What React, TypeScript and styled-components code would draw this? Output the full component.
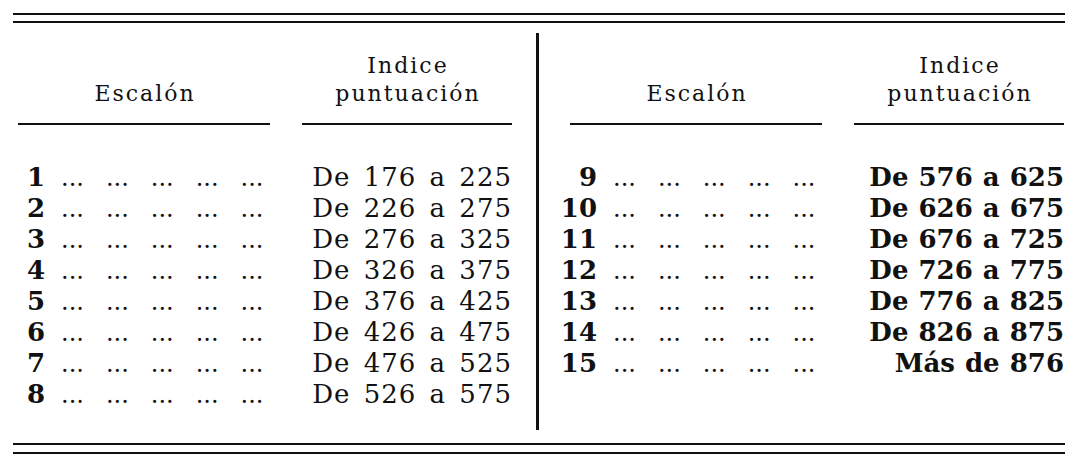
import styled, { createGlobalStyle } from 'styled-components';

const Global = createGlobalStyle`
  html, body {
    margin: 0;
    padding: 0;
    background: #fff;
  }
  body {
    font-family: "DejaVu Serif", "Liberation Serif", serif;
    color: #111;
  }
`;

const Page = styled.div`
  width: 1052px;
  margin-left: 13px;
  padding-top: 13px;
`;

const DoubleRule = styled.div<{ $gap: number }>`
  height: ${(p) => p.$gap}px;
  border-top: 2px solid #111;
  border-bottom: 2px solid #111;
`;

const Body = styled.div`
  display: grid;
  grid-template-columns: 523px 1fr;
  margin: 10px 0 13px;
`;

const Half = styled.div<{ $divider?: boolean }>`
  display: grid;
  grid-template-columns: 252px 210px;
  column-gap: 32px;
  align-content: start;
  padding: 19px 0 20px ${(p) => (p.$divider ? 31 : 5)}px;
  border-left: ${(p) => (p.$divider ? '3px solid #111' : 'none')};
`;

const HeadCell = styled.div`
  display: flex;
  flex-direction: column;
  justify-content: flex-end;
  align-items: center;
  font-size: 22px;
  line-height: 28px;
  letter-spacing: 2px;
  padding-bottom: 15px;
  border-bottom: 2px solid #111;
  margin-bottom: 37px;

  & span {
    padding-left: 2px;
  }
`;

const Step = styled.div`
  display: flex;
  align-items: baseline;
  height: 31px;
  line-height: 31px;
  font-size: 26px;
`;

const Num = styled.div`
  display: flex;
  justify-content: flex-end;
  flex-shrink: 0;
  width: 27px;
  font-weight: 700;
`;

const Dots = styled.div`
  display: flex;
  gap: 22px;
  margin-left: 16px;
  font-size: 24px;
`;

const Value = styled.div<{ $heavy?: boolean }>`
  height: 31px;
  line-height: 31px;
  font-size: 26px;
  text-align: right;
  white-space: nowrap;
  font-weight: ${(p) => (p.$heavy ? 700 : 400)};
  letter-spacing: ${(p) => (p.$heavy ? '0px' : '1px')};
  word-spacing: ${(p) => (p.$heavy ? '1px' : '4px')};
`;

type Row = { step: number; range: string };

const rows: Row[] = Array.from({ length: 15 }, (_, i) => {
  const low = 176 + i * 50;
  return {
    step: i + 1,
    range: i === 14 ? 'Más de 876' : `De ${low} a ${low + 49}`,
  };
});

const Column = ({ items, right }: { items: Row[]; right?: boolean }) => (
  <Half $divider={right}>
    <HeadCell>
      <span>Escalón</span>
    </HeadCell>
    <HeadCell>
      <span>Indice</span>
      <span>puntuación</span>
    </HeadCell>
    {items.map((r) => [
      <Step key={`s${r.step}`}>
        <Num>{r.step}</Num>
        <Dots>
          {[0, 1, 2, 3, 4].map((d) => (
            <span key={d}>...</span>
          ))}
        </Dots>
      </Step>,
      <Value key={`v${r.step}`} $heavy={right}>
        {r.range}
      </Value>,
    ])}
  </Half>
);

const App = () => {
  return (
    <>
      <Global />
      <Page>
        <DoubleRule $gap={6} />
        <Body>
          <Column items={rows.slice(0, 8)} />
          <Column items={rows.slice(8)} right />
        </Body>
        <DoubleRule $gap={7} />
      </Page>
    </>
  );
};

export default App;
